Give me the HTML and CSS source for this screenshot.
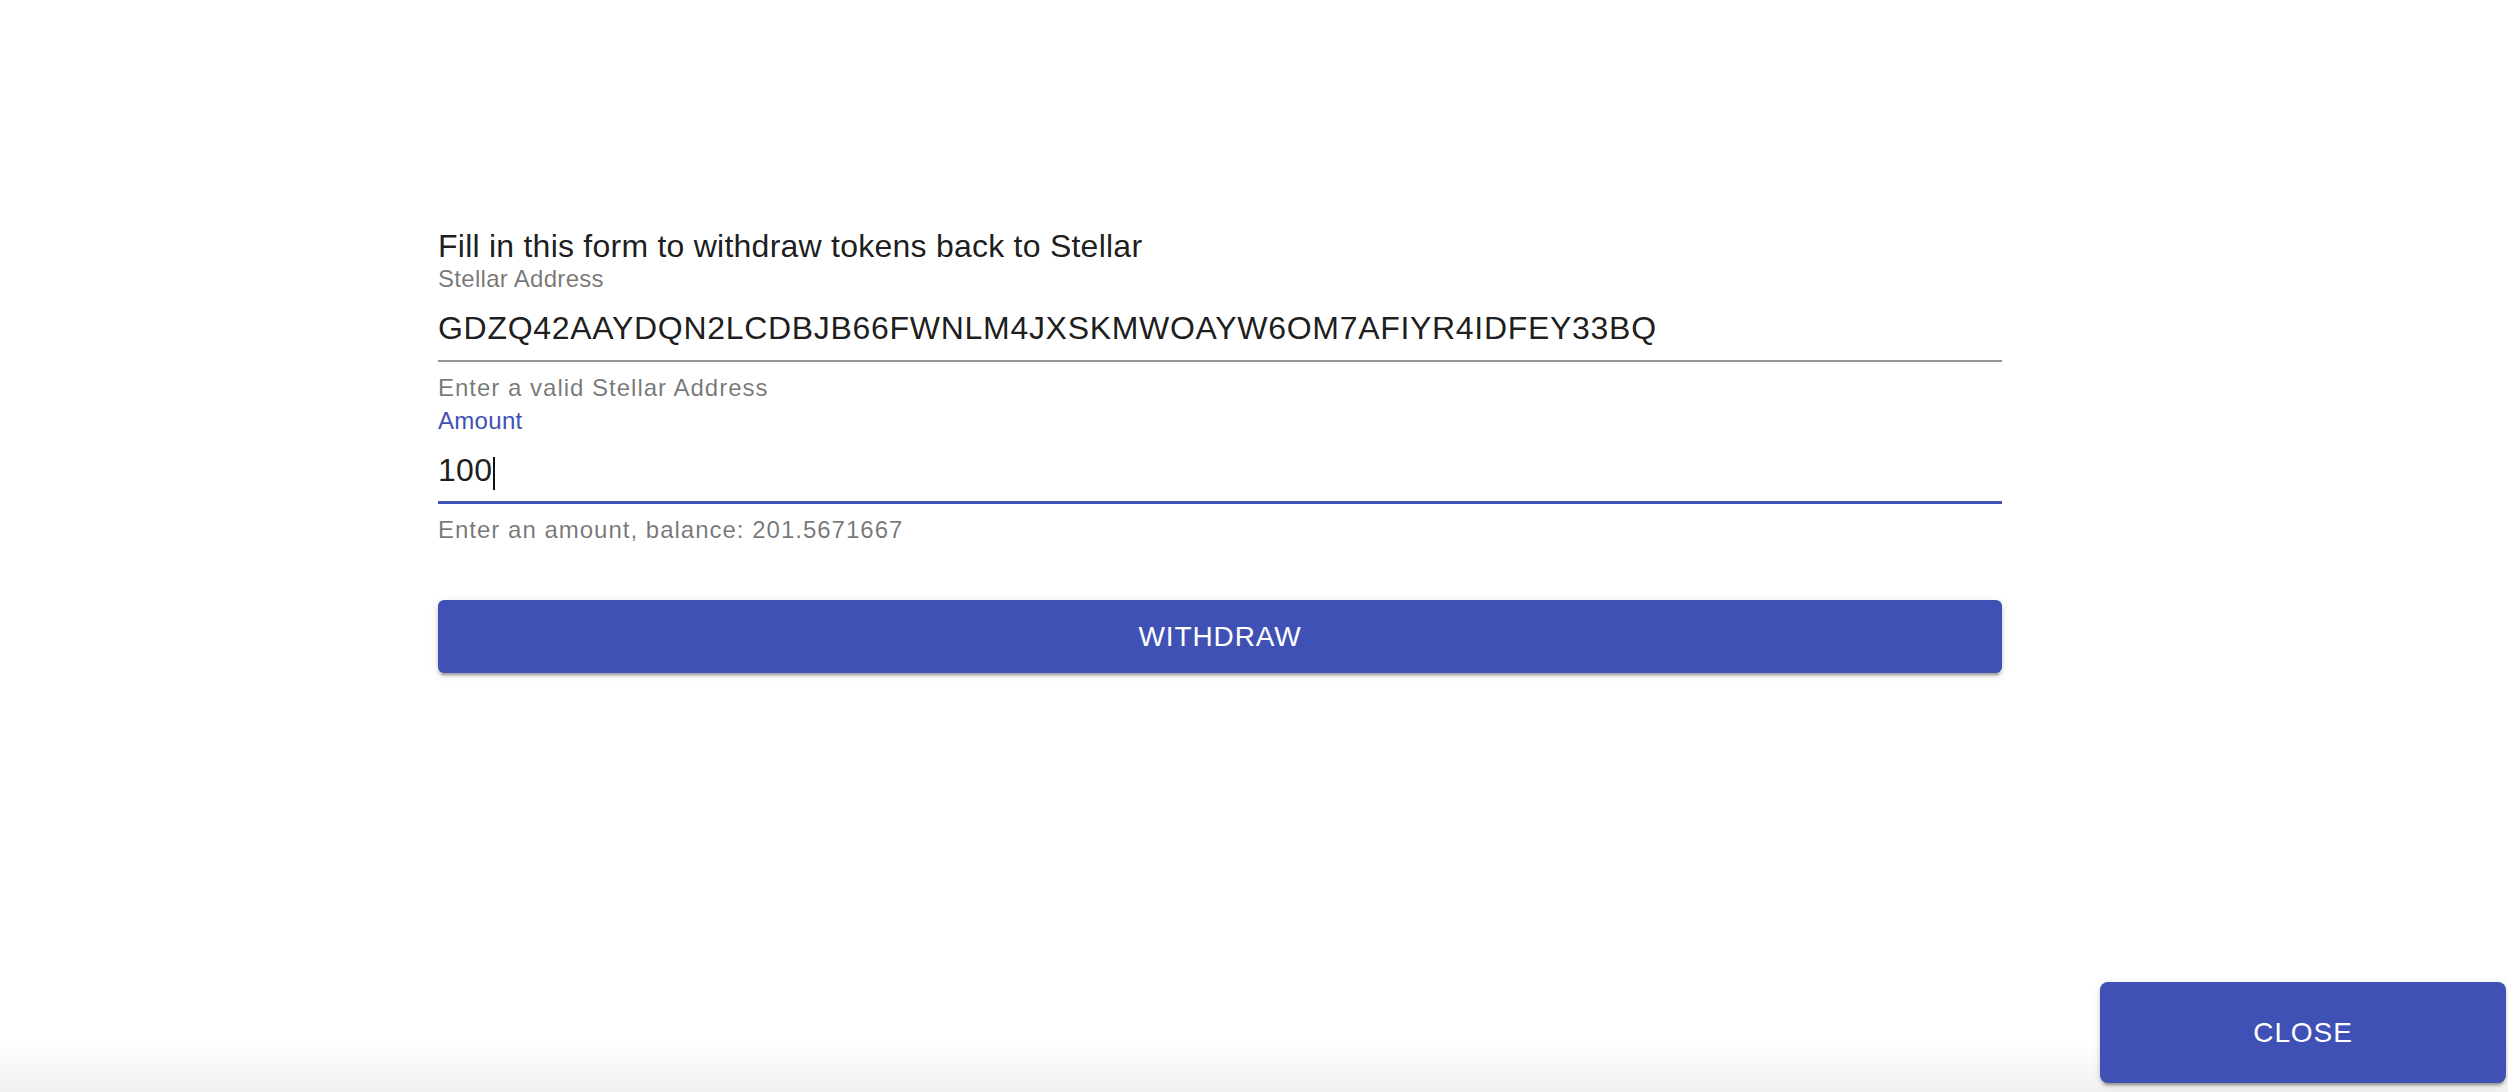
FILE: index.html
```html
<!DOCTYPE html>
<html lang="en">
<head>
<meta charset="utf-8">
<title>Withdraw</title>
<link rel="stylesheet" href="styles.css">
</head>
<body>
<div class="page">
  <main class="main">
    <form class="form">
      <div class="title">Fill in this form to withdraw tokens back to Stellar</div>
      <div class="field">
        <label class="label">Stellar Address</label>
        <div class="input input-address">GDZQ42AAYDQN2LCDBJB66FWNLM4JXSKMWOAYW6OM7AFIYR4IDFEY33BQ</div>
        <div class="helper">Enter a valid Stellar Address</div>
      </div>
      <div class="field">
        <label class="label label-focused">Amount</label>
        <div class="input input-focused">100<span class="caret"></span></div>
        <div class="helper">Enter an amount, balance: 201.5671667</div>
      </div>
      <button type="button" class="btn btn-withdraw">WITHDRAW</button>
    </form>
  </main>
  <footer class="footer">
    <button type="button" class="btn btn-close">CLOSE</button>
  </footer>
</div>
</body>
</html>
```
FILE: styles.css
```css
html, body {
  margin: 0;
  padding: 0;
  background: #ffffff;
}

body {
  font-family: "Liberation Sans", Arial, Helvetica, sans-serif;
  color: rgba(0, 0, 0, 0.87);
}

.page {
  height: 1092px;
  display: flex;
  flex-direction: column;
  overflow: hidden;
}

.main {
  flex: 1;
  padding-top: 228px;
  padding-left: 438px;
}

.form {
  width: 1564px;
  display: flex;
  flex-direction: column;
}

.title {
  font-size: 32px;
  line-height: 36px;
  letter-spacing: 0.24px;
  color: rgba(0, 0, 0, 0.9);
}

.field {
  display: flex;
  flex-direction: column;
}

.field + .field {
  margin-top: 3px;
}

.label {
  font-size: 24px;
  line-height: 30px;
  letter-spacing: 0.3px;
  color: rgba(0, 0, 0, 0.54);
}

.label-focused {
  color: #3f51b5;
}

.input {
  margin-top: 14px;
  font-size: 32px;
  line-height: 40px;
  letter-spacing: 0.3px;
  color: rgba(0, 0, 0, 0.9);
  padding-bottom: 12px;
  border-bottom: 2px solid rgba(0, 0, 0, 0.42);
  white-space: nowrap;
}

.input-address {
  letter-spacing: 0.7px;
}

.input-focused {
  padding-bottom: 11px;
  border-bottom: 3px solid #3f51b5;
}

.caret {
  display: inline-block;
  width: 2px;
  height: 33px;
  margin-left: 1px;
  background: #111;
  vertical-align: -9px;
}

.helper {
  margin-top: 11px;
  font-size: 24px;
  line-height: 30px;
  letter-spacing: 1px;
  color: rgba(0, 0, 0, 0.54);
}

.btn {
  border: none;
  background: #3f51b5;
  color: #ffffff;
  font-family: "Liberation Sans", Arial, Helvetica, sans-serif;
  font-size: 28px;
  letter-spacing: 0.9px;
  border-radius: 6px;
  padding: 0;
  cursor: pointer;
  box-shadow: 0 5px 2px -3px rgba(0, 0, 0, 0.2), 0 3px 3px 0 rgba(0, 0, 0, 0.14), 0 2px 8px 0 rgba(0, 0, 0, 0.12);
}

.btn-withdraw {
  margin-top: 55px;
  height: 73px;
  width: 100%;
}

.footer {
  height: 110px;
  display: flex;
  justify-content: flex-end;
  align-items: flex-start;
  padding-right: 2px;
  background: linear-gradient(to bottom, rgba(0, 0, 0, 0) 0, rgba(0, 0, 0, 0) 52%, rgba(0, 0, 0, 0.055) 100%);
}

.btn-close {
  width: 406px;
  height: 101px;
  border-radius: 8px;
}
```
